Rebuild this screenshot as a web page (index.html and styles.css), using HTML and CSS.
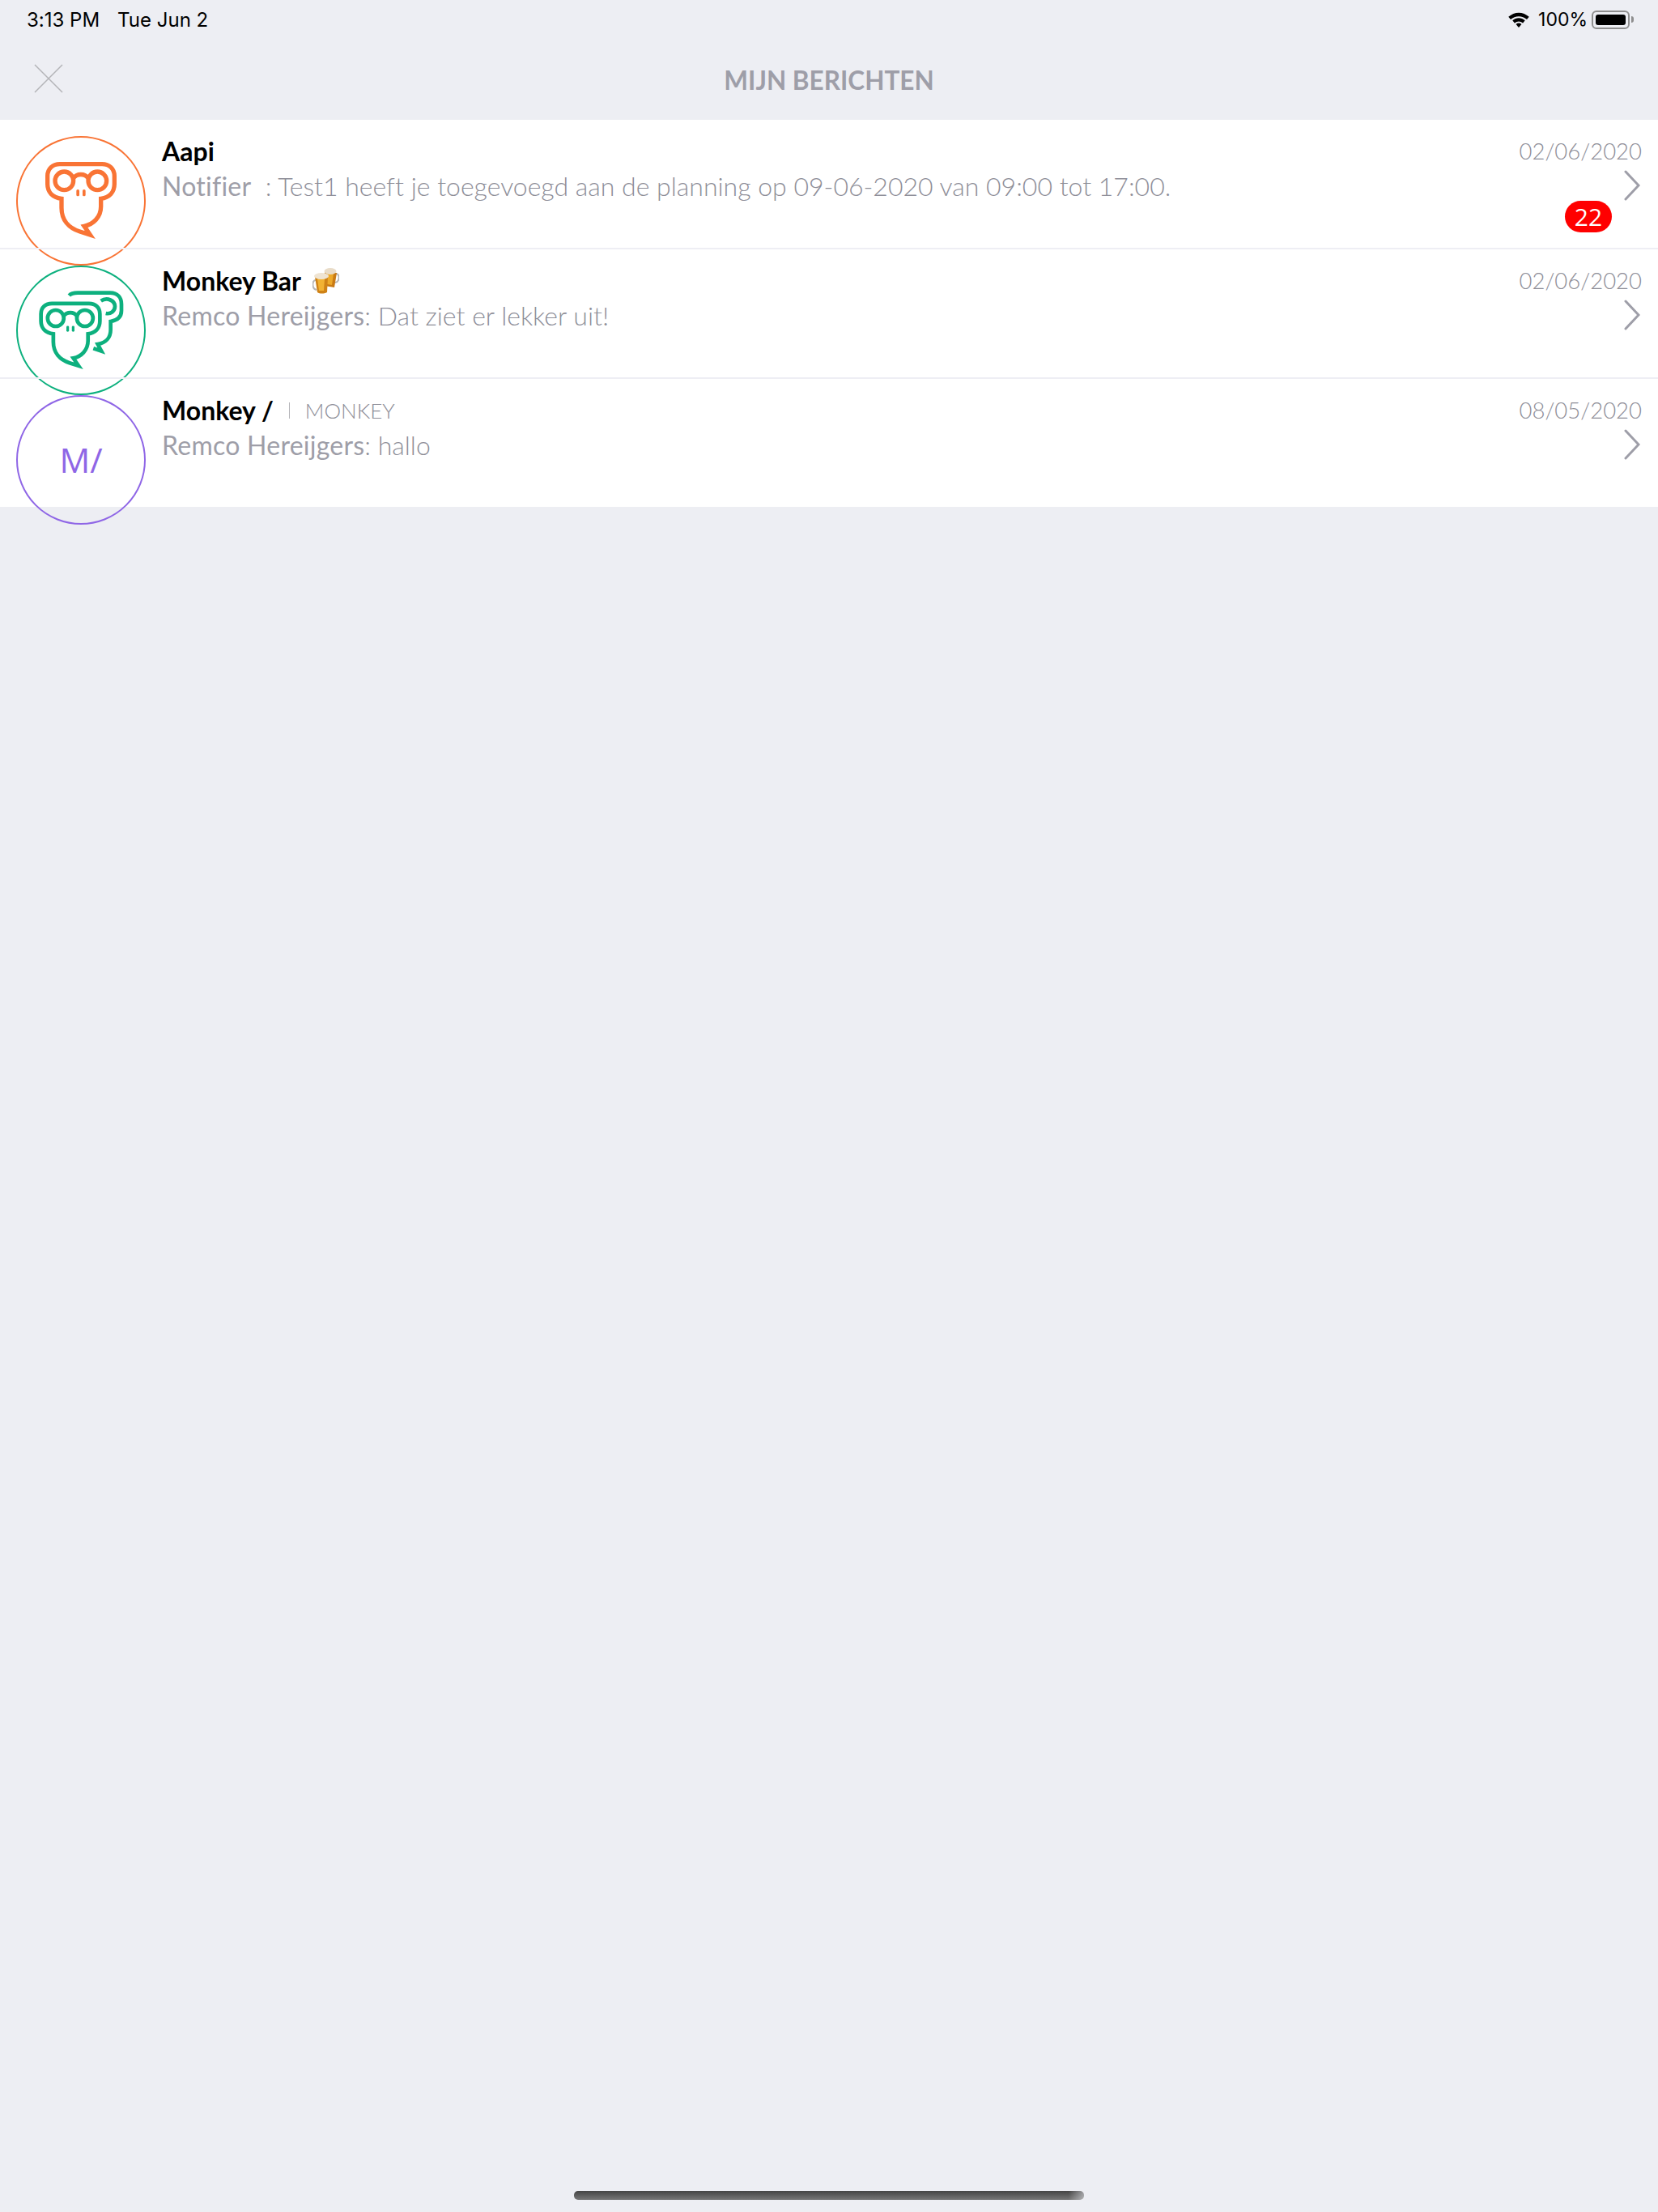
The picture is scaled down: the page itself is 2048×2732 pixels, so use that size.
FILE: index.html
```html
<!DOCTYPE html>
<html lang="nl">
<head>
    <meta charset="UTF-8">
    <meta name="viewport" content="width=device-width, initial-scale=1.0">
    <title>Mijn berichten</title>
    <link rel="stylesheet" href="styles.css">
</head>

<body>

    <div class="page">

        <div class="status-bar">
            <div class="status-left">
                <span>3:13 PM</span>
                <span>Tue Jun 2</span>
            </div>
            <div class="status-right">
                <svg class="wifi" width="28" height="20" viewBox="0 0 28 22">
                    <path d="M0 7.5 C8 0 20 0 28 7.5 L25 11 C19 5.4 9 5.4 3 11 Z" />
                    <path d="M5.5 12.5 C10.5 8 17.5 8 22.5 12.5 L19.6 16 C16.2 13 11.8 13 8.4 16 Z" />
                    <path d="M10.2 17.5 C12.5 15.6 15.5 15.6 17.8 17.5 L14 22 Z" />
                </svg>
                <span>100%</span>
                <div class="battery">
                    <div class="battery-level"></div>
                </div>
                <div class="battery-nub"></div>
            </div>
        </div>

        <div class="nav-bar">
            <svg class="close-icon" width="36" height="36" viewBox="0 0 36 36">
                <path d="M1 1 L35 35 M35 1 L1 35" />
            </svg>
            <div class="nav-title">MIJN BERICHTEN</div>
        </div>

        <div class="chat-list">

            <div class="chat-row">
                <div class="avatar avatar-orange">
                    <svg class="monkey" viewBox="66 90 468 468">
                        <path d="M228 316 C195 312 176 292 176 262 L176 232 C176 205 195 188 222 188 L378 188 C405 188 424 205 424 232 L424 262 C424 292 405 312 374 316 L374 345 C374 385 345 412 312 418 L334 450 L296 438 C255 425 228 395 228 350 Z" />
                        <circle cx="238" cy="250" r="34" />
                        <circle cx="361" cy="250" r="34" />
                        <path d="M272 240 C285 222 314 222 327 240" />
                        <rect class="nostril" x="283" y="282" width="11" height="25" rx="5" />
                        <rect class="nostril" x="306" y="282" width="11" height="25" rx="5" />
                    </svg>
                </div>
                <div class="chat-body">
                    <div class="chat-name">Aapi</div>
                    <div class="chat-text"><b>Notifier</b>&nbsp; : Test1 heeft je toegevoegd aan de planning op 09-06-2020 van 09:00 tot 17:00.</div>
                </div>
                <div class="chat-meta">
                    <div class="chat-date">02/06/2020</div>
                    <svg class="chevron" width="20" height="38" viewBox="0 0 20 38">
                        <path d="M2 2 L18 19 L2 36" />
                    </svg>
                    <div class="badge">22</div>
                </div>
            </div>
            <div class="chat-line"></div>

            <div class="chat-row">
                <div class="avatar avatar-green">
                    <svg class="monkey" viewBox="66 61 468 468">
                        <g transform="translate(-3 30) scale(0.88)">
                            <path d="M228 316 C195 312 176 292 176 262 L176 232 C176 205 195 188 222 188 L378 188 C405 188 424 205 424 232 L424 262 C424 292 405 312 374 316 L374 345 C374 385 345 412 312 418 L334 450 L296 438 C255 425 228 395 228 350 Z" />
                            <circle cx="238" cy="250" r="34" />
                            <circle cx="361" cy="250" r="34" />
                            <path d="M272 240 C285 222 314 222 327 240" />
                            <rect class="nostril" x="283" y="282" width="11" height="25" rx="5" />
                            <rect class="nostril" x="306" y="282" width="11" height="25" rx="5" />
                        </g>
                        <path class="back" d="M256 166 C264 157 274 156 288 156 L408 156 C436 156 450 174 450 198 L450 222 C450 246 432 258 410 262 L410 292 C410 322 392 342 362 346 L376 372 L346 362" />
                        <path class="back" d="M374 186 C398 170 426 186 426 206 C426 224 410 236 392 232" />
                    </svg>
                </div>
                <div class="chat-body">
                    <div class="chat-name">Monkey Bar
                        <svg class="beers" width="33" height="32" viewBox="0 0 33 32">
                            <path d="M29 7 C34 7 34 17 28 18" fill="none" stroke="#b5b5b5" stroke-width="2" />
                            <path d="M15 5 L30 6 L27 24 L15 22 Z" fill="#c97a14" />
                            <path d="M18 7 L26 7 L24 21 L18 20 Z" fill="#eda92a" />
                            <ellipse cx="22" cy="4" rx="7.5" ry="4" fill="#e9dcc8" />
                            <path d="M4 15 C-1 15 -1 26 5 27" fill="none" stroke="#b5b5b5" stroke-width="2" />
                            <path d="M3 11 L19 11 L18 30 C14 32 9 32 6 30 Z" fill="#cf8216" />
                            <path d="M6 13 L15 13 L14 28 L8 28 Z" fill="#f2b233" />
                            <ellipse cx="11" cy="10" rx="9" ry="4" fill="#efe4d2" />
                        </svg>
                    </div>
                    <div class="chat-text"><b>Remco Hereijgers</b>: Dat ziet er lekker uit!</div>
                </div>
                <div class="chat-meta">
                    <div class="chat-date">02/06/2020</div>
                    <svg class="chevron" width="20" height="38" viewBox="0 0 20 38">
                        <path d="M2 2 L18 19 L2 36" />
                    </svg>
                </div>
            </div>
            <div class="chat-line"></div>

            <div class="chat-row chat-row-last">
                <div class="avatar avatar-purple">M/</div>
                <div class="chat-body">
                    <div class="chat-name">Monkey /
                        <span class="chat-group">MONKEY</span>
                    </div>
                    <div class="chat-text"><b>Remco Hereijgers</b>: hallo</div>
                </div>
                <div class="chat-meta">
                    <div class="chat-date">08/05/2020</div>
                    <svg class="chevron" width="20" height="38" viewBox="0 0 20 38">
                        <path d="M2 2 L18 19 L2 36" />
                    </svg>
                </div>
            </div>

        </div>

        <div class="home-bar"></div>

    </div>

</body>
</html>
```

FILE: styles.css
```css
body {
    margin: 0;
    font-family: "Lato", "Open Sans", sans-serif;
    font-variant-ligatures: none;
    background-color: #edeef3;
    color: #9e9ea8;
}
.page {
    height: 2732px;
    display: flex;
    flex-direction: column;
    overflow: hidden;
}

/* status bar */
.status-bar {
    height: 46px;
    padding: 2px 30px 0 33px;
    box-sizing: border-box;
    display: flex;
    justify-content: space-between;
    align-items: center;
    font-family: "Inter", sans-serif;
    font-size: 23px;
    color: #000;
}
.status-left {
    display: flex;
    gap: 22px;
    font-size: 24px;
}
.status-right {
    display: flex;
    align-items: center;
}
.wifi {
    fill: #000;
    margin-right: 10px;
}
.battery {
    width: 47px;
    height: 23px;
    margin-left: 5px;
    padding: 3px;
    box-sizing: border-box;
    border: 2px solid #8e8e8e;
    border-radius: 6px;
}
.battery-level {
    height: 100%;
    background: #000;
    border-radius: 3px;
}
.battery-nub {
    width: 3px;
    height: 8px;
    margin-left: 2px;
    background: #8e8e8e;
    border-radius: 0 3px 3px 0;
}

/* nav */
.nav-bar {
    height: 102px;
    display: flex;
    align-items: center;
    justify-content: center;
    position: relative;
}
.close-icon {
    position: absolute;
    left: 42px;
    top: 33px;
}
.close-icon path {
    fill: none;
    stroke: #b4b4b8;
    stroke-width: 1.5;
}
.nav-title {
    font-size: 31.5px;
    font-weight: 700;
    padding-top: 3px;
}

/* list */
.chat-row {
    height: 160px;
    box-sizing: border-box;
    background: white;
    padding: 20px 20px 0 20px;
    display: flex;
}
.chat-row-last {
    height: 158px;
}
/* the line runs over the avatar rings */
.chat-line {
    position: relative;
    height: 2px;
    margin-top: -2px;
    background: #eeeef4;
}
.avatar {
    flex: none;
    width: 160px;
    height: 160px;
    box-sizing: border-box;
    border: 2px solid;
    border-radius: 50%;
    display: flex;
    align-items: center;
    justify-content: center;
}
.avatar-orange {
    color: #f97435;
}
.avatar-green {
    color: #0db07e;
}
.avatar-purple {
    color: #8f66e6;
    font-family: "Open Sans", sans-serif;
    font-size: 42px;
    padding-bottom: 2px;
}
.monkey {
    width: 156px;
    height: 156px;
    fill: none;
    stroke: currentColor;
    stroke-width: 16;
}
.monkey .nostril {
    fill: currentColor;
    stroke: none;
}
.monkey .back {
    stroke-width: 14;
}
.chat-body {
    flex: 1;
    margin-left: 20px;
}
.chat-name {
    height: 38px;
    line-height: 38px;
    font-size: 32px;
    font-weight: 700;
    color: #000;
    display: flex;
    align-items: center;
    gap: 12px;
}
.beers {
    margin-left: 2px;
}
.chat-group {
    margin-left: 7px;
    padding-left: 19px;
    border-left: 1px solid #b4b4b8;
    font-size: 26px;
    line-height: 20px;
    font-weight: 300;
    color: #8e8e98;
}
.chat-text {
    margin-top: 3px;
    font-size: 32px;
    line-height: 42px;
    font-weight: 300;
    color: #8e8e98;
}
.chat-text b {
    color: #9e9ea8;
    letter-spacing: 0.25px;
}
.chat-meta {
    flex: none;
    width: 160px;
    display: flex;
    flex-direction: column;
    align-items: flex-end;
    position: relative;
}
.chat-date {
    font-size: 27.5px;
    line-height: 38px;
    font-weight: 300;
    color: #8e8e98;
}
.chevron {
    margin-top: 4px;
    margin-right: 2px;
}
.chevron path {
    fill: none;
    stroke: #9e9ea8;
    stroke-width: 3;
    stroke-linecap: round;
}
.badge {
    position: absolute;
    top: 80px;
    right: 37px;
    width: 58px;
    height: 39px;
    border-radius: 20px;
    background: #ff0000;
    color: white;
    font-family: "Open Sans", sans-serif;
    font-size: 30px;
    line-height: 39px;
    text-align: center;
}

/* home indicator */
.home-bar {
    width: 630px;
    height: 11px;
    margin: auto auto 15px;
    border-radius: 5px;
    background: linear-gradient(to right, transparent 97%, rgba(237, 238, 243, 0.5)), linear-gradient(#444444, #777777);
}
```
